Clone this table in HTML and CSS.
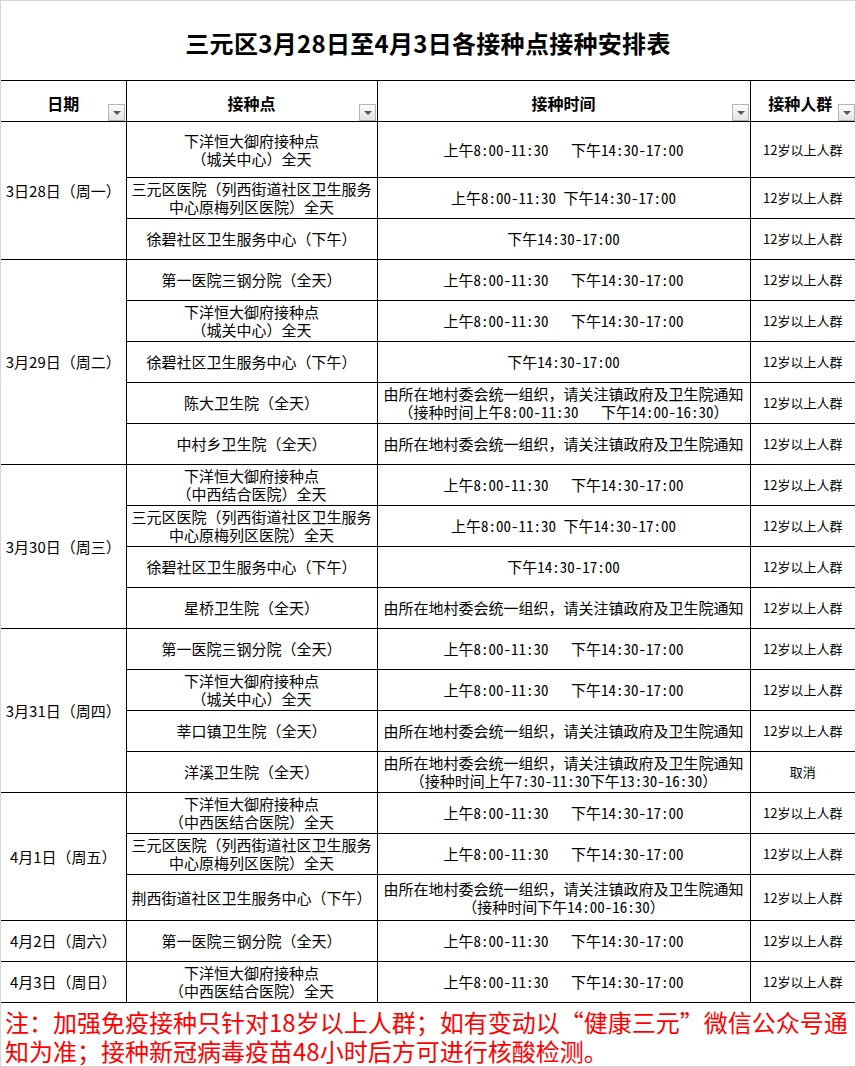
FILE: index.html
```html
<!DOCTYPE html>
<html lang="zh-CN">
<head>
<meta charset="utf-8">
<title>三元区3月28日至4月3日各接种点接种安排表</title>
<link rel="stylesheet" href="styles.css">
</head>
<body>
<div class="page">
  <div class="title">三元区3月28日至4月3日各接种点接种安排表</div>
  <table class="sched">
    <colgroup>
      <col class="c-date">
      <col class="c-site">
      <col class="c-time">
      <col class="c-group">
    </colgroup>
    <thead>
      <tr class="head">
        <th>日期<span class="dd"></span></th>
        <th>接种点<span class="dd"></span></th>
        <th>接种时间<span class="dd"></span></th>
        <th class="h-group">接种人群<span class="dd"></span></th>
      </tr>
    </thead>
    <tbody>
      <tr class="tall">
        <td class="date" rowspan="3">3日28日（周一）</td>
        <td>下洋恒大御府接种点<br>（城关中心）全天</td>
        <td class="t">上午8:00-11:30&nbsp;&nbsp;&nbsp;下午14:30-17:00</td>
        <td class="grp">12岁以上人群</td>
      </tr>
      <tr>
        <td>三元区医院（列西街道社区卫生服务<br>中心原梅列区医院）全天</td>
        <td class="t">上午8:00-11:30 下午14:30-17:00</td>
        <td class="grp">12岁以上人群</td>
      </tr>
      <tr>
        <td>徐碧社区卫生服务中心（下午）</td>
        <td class="t">下午14:30-17:00</td>
        <td class="grp">12岁以上人群</td>
      </tr>

      <tr>
        <td class="date" rowspan="5">3月29日（周二）</td>
        <td>第一医院三钢分院（全天）</td>
        <td class="t">上午8:00-11:30&nbsp;&nbsp;&nbsp;下午14:30-17:00</td>
        <td class="grp">12岁以上人群</td>
      </tr>
      <tr>
        <td>下洋恒大御府接种点<br>（城关中心）全天</td>
        <td class="t">上午8:00-11:30&nbsp;&nbsp;&nbsp;下午14:30-17:00</td>
        <td class="grp">12岁以上人群</td>
      </tr>
      <tr>
        <td>徐碧社区卫生服务中心（下午）</td>
        <td class="t">下午14:30-17:00</td>
        <td class="grp">12岁以上人群</td>
      </tr>
      <tr>
        <td>陈大卫生院（全天）</td>
        <td>由所在地村委会统一组织，请关注镇政府及卫生院通知<br>（接种时间上午<span class="hw">8:00-11:30&nbsp;&nbsp;&nbsp;</span>下午<span class="hw">14:00-16:30</span>）</td>
        <td class="grp">12岁以上人群</td>
      </tr>
      <tr>
        <td>中村乡卫生院（全天）</td>
        <td>由所在地村委会统一组织，请关注镇政府及卫生院通知</td>
        <td class="grp">12岁以上人群</td>
      </tr>

      <tr>
        <td class="date" rowspan="4">3月30日（周三）</td>
        <td>下洋恒大御府接种点<br>（中西结合医院）全天</td>
        <td class="t">上午8:00-11:30&nbsp;&nbsp;&nbsp;下午14:30-17:00</td>
        <td class="grp">12岁以上人群</td>
      </tr>
      <tr>
        <td>三元区医院（列西街道社区卫生服务<br>中心原梅列区医院）全天</td>
        <td class="t">上午8:00-11:30 下午14:30-17:00</td>
        <td class="grp">12岁以上人群</td>
      </tr>
      <tr>
        <td>徐碧社区卫生服务中心（下午）</td>
        <td class="t">下午14:30-17:00</td>
        <td class="grp">12岁以上人群</td>
      </tr>
      <tr>
        <td>星桥卫生院（全天）</td>
        <td>由所在地村委会统一组织，请关注镇政府及卫生院通知</td>
        <td class="grp">12岁以上人群</td>
      </tr>

      <tr>
        <td class="date" rowspan="4">3月31日（周四）</td>
        <td>第一医院三钢分院（全天）</td>
        <td class="t">上午8:00-11:30&nbsp;&nbsp;&nbsp;下午14:30-17:00</td>
        <td class="grp">12岁以上人群</td>
      </tr>
      <tr>
        <td>下洋恒大御府接种点<br>（城关中心）全天</td>
        <td class="t">上午8:00-11:30&nbsp;&nbsp;&nbsp;下午14:30-17:00</td>
        <td class="grp">12岁以上人群</td>
      </tr>
      <tr>
        <td>莘口镇卫生院（全天）</td>
        <td>由所在地村委会统一组织，请关注镇政府及卫生院通知</td>
        <td class="grp">12岁以上人群</td>
      </tr>
      <tr>
        <td>洋溪卫生院（全天）</td>
        <td>由所在地村委会统一组织，请关注镇政府及卫生院通知<br>（接种时间上午<span class="hw">7:30-11:30</span>下午<span class="hw">13:30-16:30</span>）</td>
        <td class="grp">取消</td>
      </tr>

      <tr>
        <td class="date" rowspan="3">4月1日（周五）</td>
        <td>下洋恒大御府接种点<br>（中西医结合医院）全天</td>
        <td class="t">上午8:00-11:30&nbsp;&nbsp;&nbsp;下午14:30-17:00</td>
        <td class="grp">12岁以上人群</td>
      </tr>
      <tr>
        <td>三元区医院（列西街道社区卫生服务<br>中心原梅列区医院）全天</td>
        <td class="t">上午8:00-11:30&nbsp;&nbsp;&nbsp;下午14:30-17:00</td>
        <td class="grp">12岁以上人群</td>
      </tr>
      <tr class="mid">
        <td>荆西街道社区卫生服务中心（下午）</td>
        <td>由所在地村委会统一组织，请关注镇政府及卫生院通知<br>（接种时间下午<span class="hw">14:00-16:30</span>）</td>
        <td class="grp">12岁以上人群</td>
      </tr>

      <tr>
        <td class="date">4月2日（周六）</td>
        <td>第一医院三钢分院（全天）</td>
        <td class="t">上午8:00-11:30&nbsp;&nbsp;&nbsp;下午14:30-17:00</td>
        <td class="grp">12岁以上人群</td>
      </tr>
      <tr>
        <td class="date">4月3日（周日）</td>
        <td>下洋恒大御府接种点<br>（中西医结合医院）全天</td>
        <td class="t">上午8:00-11:30&nbsp;&nbsp;&nbsp;下午14:30-17:00</td>
        <td class="grp">12岁以上人群</td>
      </tr>
    </tbody>
  </table>
  <p class="note">注：加强免疫接种只针对18岁以上人群；如有变动以“健康三元”微信公众号通<br>知为准；接种新冠病毒疫苗48小时后方可进行核酸检测。</p>
</div>
</body>
</html>
```
FILE: styles.css
```css
* { box-sizing: border-box; }

html, body {
  margin: 0;
  padding: 0;
  background: #ffffff;
}

body {
  font-family: "Noto Sans CJK SC", "Noto Sans", sans-serif;
  color: #000000;
}

.page {
  width: 856px;
  height: 1067px;
  border: 1px solid #d6d6d6;
  background: #ffffff;
  overflow: hidden;
}

.title {
  height: 79px;
  display: flex;
  align-items: center;
  justify-content: center;
  padding-top: 4px;
  font-size: 24px;
  font-weight: 700;
  letter-spacing: 0.3px;
}

.sched {
  width: 854px;
  table-layout: fixed;
  border-collapse: collapse;
}

.c-date { width: 125px; }
.c-site { width: 251px; }
.c-time { width: 373px; }
.c-group { width: 105px; }

.sched th,
.sched td {
  border: 1px solid #000000;
  padding: 0;
  text-align: center;
  vertical-align: middle;
  font-size: 15px;
  line-height: 18px;
  font-weight: 400;
  white-space: nowrap;
}

.sched tr > :first-child { border-left: none; }
.sched tr > :last-child { border-right: none; }
.sched td.date { border-left: none; }

.sched tr { height: 41px; }
.sched tr.tall { height: 56px; }
.sched tr.mid { height: 46px; }

/* half-width digits, like the bitmap font of the original sheet */
.sched td.t,
.sched .hw {
  font-feature-settings: "hwid" 1;
}

.sched .head th {
  position: relative;
  height: 41px;
  font-size: 16px;
  font-weight: 700;
  padding-top: 4px;
}

.sched .head th.h-group { padding-right: 5px; }

.dd {
  position: absolute;
  right: 1px;
  bottom: 0;
  width: 17px;
  height: 17px;
  border: 1px solid #b4b4b4;
  background: linear-gradient(#fbfbfb, #e4e4e4);
}

.sched .head th:last-child .dd { right: 0; }

.dd::after {
  content: "";
  position: absolute;
  left: 4px;
  top: 6px;
  border-left: 4px solid transparent;
  border-right: 4px solid transparent;
  border-top: 4px solid #555555;
}

.sched td.grp {
  font-size: 13px;
}

.note {
  margin: 0;
  padding: 4px 0 0 4px;
  color: #ff0000;
  font-size: 24px;
  line-height: 29px;
  white-space: nowrap;
}
```
